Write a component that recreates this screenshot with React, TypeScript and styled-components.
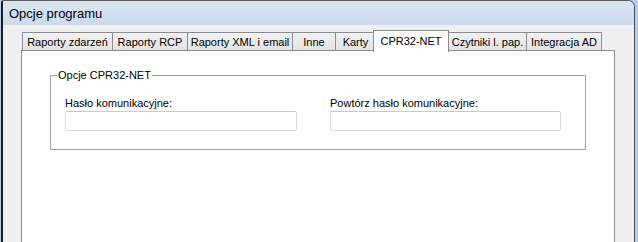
import styled, { createGlobalStyle } from 'styled-components'

const GlobalStyle = createGlobalStyle`
	html, body {
		margin: 0;
		padding: 0;
		overflow: hidden;
		background: #b7cde8;
	}
	body {
		font-family: 'Liberation Sans', Arial, sans-serif;
		font-size: 11px;
		color: #000;
	}
`

const WindowStyled = styled.div`
	box-sizing: border-box;
	margin-left: 1px;
	width: 634px;
	height: 242px;
	border-left: 2px solid #1c1c1c;
	border-right: 1px solid #4a4a4a;
	border-top: 1px solid #5a5a5a;
	border-top-left-radius: 3px;
	border-top-right-radius: 7px;
	background: #f0f0f0;
	display: flex;
	flex-direction: column;
	overflow: hidden;
`

const TitleBar = styled.div`
	height: 24px;
	flex: none;
	display: flex;
	align-items: center;
	padding-left: 6px;
	background: linear-gradient(#dbe6f3, #c9daee);
	font-size: 13px;
	color: #000;
`

const Body = styled.div`
	flex: 1;
	display: flex;
	flex-direction: column;
	padding: 5px 19px 0 18px;
`

const TabRow = styled.div`
	display: flex;
	align-items: flex-end;
	height: 22px;
	padding-left: 1px;
	position: relative;
	z-index: 1;
`

const Tab = styled.div<{ $width: number; $active?: boolean }>`
	box-sizing: border-box;
	width: ${(p) => p.$width}px;
	height: ${(p) => (p.$active ? 22 : 18)}px;
	margin-bottom: ${(p) => (p.$active ? 0 : 2)}px;
	margin-left: ${(p) => (p.$active ? -3 : -1)}px;
	&:first-child {
		margin-left: 0;
	}
	display: flex;
	align-items: center;
	justify-content: center;
	padding-bottom: ${(p) => (p.$active ? 2 : 0)}px;
	border: 1px solid #898c95;
	border-bottom: none;
	background: ${(p) => (p.$active ? '#fff' : 'linear-gradient(#f2f2f2, #e3e3e3)')};
	position: relative;
	z-index: ${(p) => (p.$active ? 2 : 1)};
	white-space: nowrap;
`

const Panel = styled.div`
	flex: 1;
	margin-top: -2px;
	background: #fff;
	border: 1px solid #898c95;
	border-bottom: none;
	padding: 18px 0 0 28px;
`

const Group = styled.fieldset`
	box-sizing: border-box;
	width: 536px;
	margin: 0;
	padding: 0;
	border: 1px solid #a5a5a5;
	legend {
		margin-left: 6px;
		padding: 0 1px;
		line-height: 13px;
	}
`

const Fields = styled.div`
	display: grid;
	grid-template-columns: 232px 231px;
	column-gap: 33px;
	padding: 15px 0 18px 14px;
`

const Field = styled.label`
	display: flex;
	flex-direction: column;
	gap: 1px;
	line-height: 13px;
`

const Input = styled.input`
	box-sizing: border-box;
	height: 20px;
	width: 100%;
	margin: 0;
	border: 1px solid #dadde2;
	border-top-color: #c6c9ce;
	border-radius: 2px;
	background: #fff;
	font: inherit;
	outline: none;
`

const tabs = [
	{ label: 'Raporty zdarzeń', width: 91 },
	{ label: 'Raporty RCP', width: 76 },
	{ label: 'Raporty XML i email', width: 106 },
	{ label: 'Inne', width: 44 },
	{ label: 'Karty', width: 41 },
	{ label: 'CPR32-NET', width: 76, active: true },
	{ label: 'Czytniki l. pap.', width: 79 },
	{ label: 'Integracja AD', width: 76 },
]

const App = () => {
	return (
		<>
			<GlobalStyle />
			<WindowStyled>
				<TitleBar>Opcje programu</TitleBar>
				<Body>
					<TabRow>
						{tabs.map((t) => (
							<Tab key={t.label} $width={t.width} $active={t.active}>
								{t.label}
							</Tab>
						))}
					</TabRow>
					<Panel>
						<Group>
							<legend>Opcje CPR32-NET</legend>
							<Fields>
								<Field>
									Hasło komunikacyjne:
									<Input type='password' />
								</Field>
								<Field>
									Powtórz hasło komunikacyjne:
									<Input type='password' />
								</Field>
							</Fields>
						</Group>
					</Panel>
				</Body>
			</WindowStyled>
		</>
	)
}

export default App
